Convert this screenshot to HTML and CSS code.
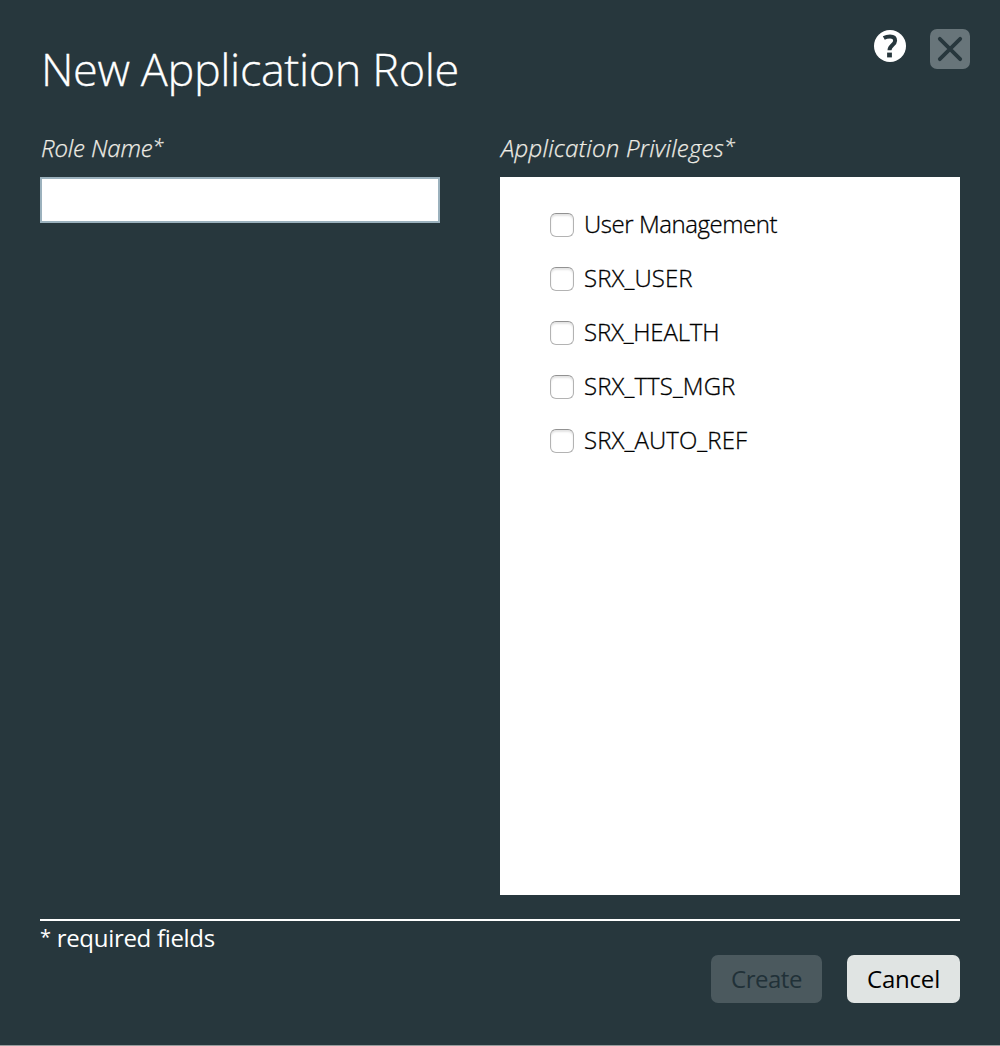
FILE: index.html
```html
<!DOCTYPE html>
<html lang="en">
<head>
<meta charset="utf-8">
<title>New Application Role</title>
<link rel="stylesheet" href="styles.css">
</head>
<body>
<main class="dialog">
  <header class="header">
    <h1 class="title">New Application Role</h1>
    <div class="tools">
      <svg class="help" viewBox="0 0 32 32" role="img" aria-label="Help">
        <circle cx="16" cy="16" r="16" fill="#fff"/>
        <path d="M9.800 8C12 6.800 14 6.500 16.100 6.500c3.300 0 5 1.500 5 4.200 0 4.200-5.600 4.500-5.600 9.600" fill="none" stroke="#27373d" stroke-width="4"/>
        <path d="M13.100 22.600h4.800v4.800h-4.800z" fill="#27373d"/>
      </svg>
      <button class="close" type="button" aria-label="Close">
        <svg viewBox="0 0 40 40"><path d="M9.800 9.800l20.400 20.400M30.200 9.800L9.800 30.200" fill="none" stroke="#27373d" stroke-width="3.800" stroke-linecap="round"/></svg>
      </button>
    </div>
  </header>
  <div class="fields">
    <div class="field">
      <label class="label role-label" for="role">Role Name<span class="star">*</span></label>
      <input class="input" id="role" type="text">
    </div>
    <div class="field">
      <span class="label priv-label">Application Privileges<span class="star">*</span></span>
      <div class="privileges">
        <label class="option"><input class="check" type="checkbox"><span class="name mixed">User Management</span></label>
        <label class="option"><input class="check" type="checkbox"><span class="name">SRX_USER</span></label>
        <label class="option"><input class="check" type="checkbox"><span class="name health">SRX_HEALTH</span></label>
        <label class="option"><input class="check" type="checkbox"><span class="name">SRX_TTS_MGR</span></label>
        <label class="option"><input class="check" type="checkbox"><span class="name">SRX_AUTO_REF</span></label>
      </div>
    </div>
  </div>
  <footer class="footer">
    <p class="note"><span class="star">*</span> required fields</p>
    <div class="actions">
      <button class="button create" type="button" disabled>Create</button>
      <button class="button cancel" type="button">Cancel</button>
    </div>
  </footer>
</main>
</body>
</html>
```
FILE: styles.css
```css
* { box-sizing: border-box; }
body {
  margin: 0;
  background: #27373d;
  font-family: "Open Sans", "Noto Sans", sans-serif;
  font-size: 24px;
  color: #fff;
}
.dialog {
  height: 1046px;
  padding: 0 40px;
  border-bottom: 1px solid #999c9d;
  display: flex;
  flex-direction: column;
  overflow: hidden;
}
.header {
  height: 131px;
  display: flex;
  justify-content: space-between;
  margin-right: -10px;
}
.title {
  margin: 39px 0 0 1px;
  font-size: 45px;
  line-height: 60px;
  font-weight: 300;
  letter-spacing: -0.38px;
  white-space: nowrap;
  -webkit-text-stroke: 0.3px currentColor;
}
.tools { display: flex; gap: 24px; padding-top: 29px; }
.help { width: 32px; height: 32px; margin-top: 1px; }
.close {
  width: 40px;
  height: 40px;
  padding: 0;
  border: 0;
  border-radius: 7px;
  background: #68757a;
}
.close svg { display: block; width: 40px; height: 40px; }
.fields {
  display: grid;
  grid-template-columns: 400px 460px;
  column-gap: 60px;
}
.field { display: flex; flex-direction: column; }
.label {
  height: 46px;
  padding-left: 1px;
  line-height: 33px;
  font-style: italic;
  font-weight: 300;
  color: #efede6;
  white-space: nowrap;
  -webkit-text-stroke: 0.25px currentColor;
}
.role-label { letter-spacing: -0.15px; }
.priv-label { letter-spacing: 0.25px; }
.star { font-size: 20px; line-height: 0; vertical-align: 3px; }
.input {
  width: 400px;
  height: 46px;
  border: 2px solid #9bb1bd;
  border-radius: 0;
  padding: 0 10px;
  background: #fff;
  font: inherit;
  outline: 0;
}
.privileges {
  height: 718px;
  padding: 21px 50px;
  background: #fff;
  color: #000;
  font-weight: 300;
}
.option {
  height: 54px;
  display: flex;
  align-items: center;
  gap: 10px;
  white-space: nowrap;
}
.name { padding-bottom: 3px; letter-spacing: 0.08px; -webkit-text-stroke: 0.3px currentColor; }
.mixed { letter-spacing: -0.45px; }
.health { letter-spacing: -0.2px; }
.check {
  appearance: none;
  width: 24px;
  height: 24px;
  margin: 0;
  border: 1px solid #b3b3b3;
  border-top-color: #929292;
  border-radius: 6px;
  background: #fff;
  box-shadow: inset 0 2px 2px #e4e4e4;
}
.footer {
  margin-top: 24px;
  border-top: 2px solid #fff;
}
.note { margin: 0; height: 34px; line-height: 34px; letter-spacing: -0.3px; }
.actions { display: flex; justify-content: flex-end; gap: 25px; }
.button {
  height: 48px;
  padding: 0 0 1px;
  border: 0;
  border-radius: 7px;
  font: inherit;
  line-height: 46px;
}
.create { width: 111px; background: #4b595e; color: #213138; letter-spacing: -0.5px; }
.cancel { width: 113px; background: #e0e4e3; color: #000; letter-spacing: -0.2px; }
```
